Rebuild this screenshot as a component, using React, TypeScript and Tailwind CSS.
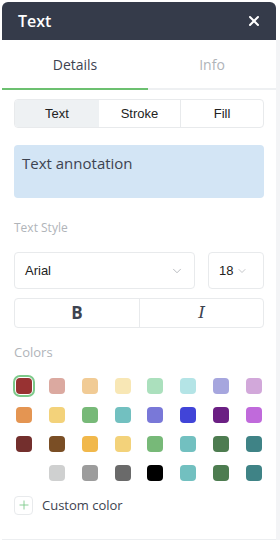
import { ChevronDown, Plus, X } from "lucide-react";

const swatchRows: (string | null)[][] = [
  ["#983232", "#dba9a0", "#f1cb95", "#f8e7b5", "#abe0bd", "#b4e4e6", "#a6a6de", "#d2a8da"],
  ["#e49552", "#f3d27a", "#77b978", "#72c0c0", "#7978d8", "#4144d8", "#6b1f83", "#c06adb"],
  ["#732f2d", "#7a4e25", "#f1b84b", "#f3d27a", "#77b978", "#72c0c0", "#4d7c50", "#3f8386"],
  [null, "#cfd0d0", "#9c9c9c", "#6a6a6a", "#000000", "#72c0c0", "#4d7c50", "#3f8386"],
];

function Swatch({ color, selected }: { color: string | null; selected?: boolean }) {
  if (!color) return <div className="h-4 w-4" />;
  return (
    <div
      className={
        selected
          ? "h-4 w-4 rounded-[4px] ring-2 ring-[#7cc98a] ring-offset-1 ring-offset-white"
          : "h-4 w-4 rounded-[4px]"
      }
      style={{ backgroundColor: color }}
    />
  );
}

export default function App() {
  return (
    <div className="flex h-[540px] w-[280px] bg-white pl-[2px] pt-[2px] font-['Open_Sans',sans-serif]">
      <div className="flex w-[278px] flex-col">
        <div className="flex h-[38px] w-[274px] items-center justify-between rounded-t-[6px] bg-[#353b4a] pl-4 pr-[14px]">
          <span className="text-[16px] font-semibold text-white">Text</span>
          <X size={16} strokeWidth={3} className="text-white" />
        </div>

        <div className="flex flex-1">
          <div className="flex w-[274px] flex-col border-b border-[#eceef0] bg-white">
            <div className="flex h-[50px] border-b-2 border-[#eef0f2]">
              <div className="relative flex w-[146px] items-center justify-center text-[14px] text-[#3d4350]">
                Details
                <div className="absolute -bottom-[2px] left-0 h-[2px] w-full bg-[#6cc070]" />
              </div>
              <div className="flex flex-1 items-center justify-center text-[14px] text-[#b0b4b9]">
                Info
              </div>
            </div>

            <div className="px-3">
              <div className="mt-[9px] flex h-[29px] overflow-hidden rounded-[4px] border border-[#e8eaec] font-['Liberation_Sans',sans-serif] text-[13px] text-[#222]">
                <div className="flex w-[84px] items-center justify-center bg-[#eef1f3]">Text</div>
                <div className="flex w-[82px] items-center justify-center border-r border-[#e8eaec]">Stroke</div>
                <div className="flex flex-1 items-center justify-center">Fill</div>
              </div>

              <div className="mt-[17px] h-[53px] rounded-[4px] bg-[#d3e5f5] px-2 pt-[7px] text-[15px] text-[#3d4350]">
                Text annotation
              </div>

              <div className="mt-[21px] text-[12px] text-[#b0b4b9]">Text Style</div>

              <div className="mt-[15px] flex gap-[13px] font-['Liberation_Sans',sans-serif] text-[13px] text-[#222]">
                <div className="flex h-[37px] w-[181px] items-center justify-between rounded-[4px] border border-[#e8eaec] pl-[10px] pr-[10px]">
                  Arial
                  <ChevronDown size={14} strokeWidth={1.25} className="text-[#a0a4a9]" />
                </div>
                <div className="flex h-[37px] flex-1 items-center gap-[3px] rounded-[4px] border border-[#e8eaec] pl-[10px]">
                  18
                  <ChevronDown size={12} strokeWidth={1.25} className="text-[#a0a4a9]" />
                </div>
              </div>

              <div className="mt-[9px] flex h-[30px] rounded-[4px] border border-[#e8eaec] text-[#3d4350]">
                <div className="flex w-[125px] items-center justify-center border-r border-[#e8eaec] text-[17px] font-bold">
                  B
                </div>
                <div className="flex flex-1 items-center justify-center font-['DejaVu_Serif',serif] text-[17px] italic font-light">
                  I
                </div>
              </div>

              <div className="mt-[15px] text-[13px] text-[#b0b4b9]">Colors</div>

              <div className="mt-[15px] flex flex-col gap-[13px] px-[2px]">
                {swatchRows.map((row, r) => (
                  <div key={r} className="flex justify-between">
                    {row.map((c, i) => (
                      <Swatch key={i} color={c} selected={r === 0 && i === 0} />
                    ))}
                  </div>
                ))}
              </div>

              <div className="mt-[15px] flex items-center gap-[9px]">
                <div className="flex h-[19px] w-[19px] items-center justify-center rounded-[4px] border border-[#e8eaec]">
                  <Plus size={14} strokeWidth={1.5} className="text-[#7cc98a]" />
                </div>
                <span className="text-[13px] text-[#3d4350]">Custom color</span>
              </div>
            </div>
          </div>
          <div className="w-[4px] bg-[#f3f4f6]" />
        </div>
      </div>
    </div>
  );
}
